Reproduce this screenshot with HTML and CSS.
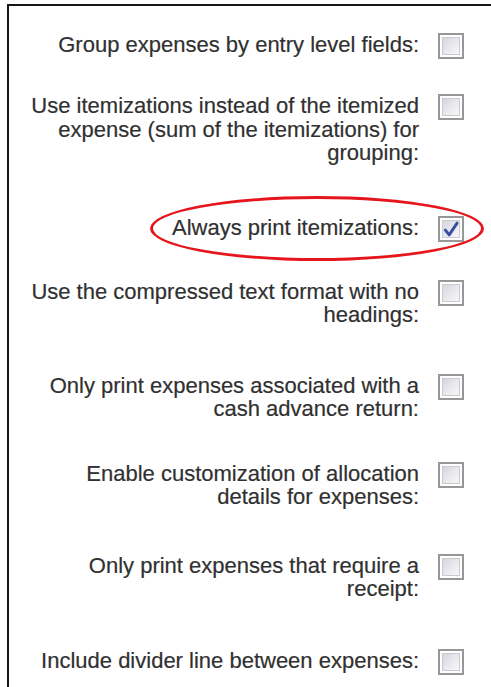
FILE: index.html
```html
<!DOCTYPE html>
<html lang="en">
<head>
<meta charset="utf-8">
<title>Print options</title>
<link rel="stylesheet" href="styles.css">
</head>
<body>
<div class="panel">
  <div class="options">
    <label class="option">
      <span class="text">Group expenses by entry level fields:</span>
      <span class="box"></span>
    </label>
    <label class="option sp-35">
      <span class="text">Use itemizations instead of the itemized expense (sum of the itemizations) for grouping:</span>
      <span class="box"></span>
    </label>
    <label class="option sp-51">
      <span class="text">Always print itemizations:</span>
      <span class="box checked">
        <svg viewBox="0 0 16 16" width="18" height="18" aria-hidden="true">
          <path d="M3 9 L6.4 13.2 L13.4 2.8" fill="none" stroke="#3a4da4" stroke-width="2.6" stroke-linecap="round" stroke-linejoin="round"/>
        </svg>
      </span>
      <span class="ring"></span>
    </label>
    <label class="option sp-38">
      <span class="text">Use the compressed text format with no headings:</span>
      <span class="box"></span>
    </label>
    <label class="option sp-47">
      <span class="text">Only print expenses associated with a cash advance return:</span>
      <span class="box"></span>
    </label>
    <label class="option sp-41">
      <span class="text">Enable customization of allocation details for expenses:</span>
      <span class="box"></span>
    </label>
    <label class="option sp-45">
      <span class="text">Only print expenses that require a receipt:</span>
      <span class="box"></span>
    </label>
    <label class="option sp-48">
      <span class="text">Include divider line between expenses:</span>
      <span class="box"></span>
    </label>
  </div>
</div>
</body>
</html>
```
FILE: styles.css
```css
html, body {
  margin: 0;
  background: #ffffff;
}

body {
  font-family: "Liberation Sans", Arial, sans-serif;
  color: #303030;
  overflow: hidden;
}

.panel {
  margin: 4px 0 0 7px;
  border-top: 2px solid #161616;
  border-left: 2px solid #161616;
  padding: 27px 0 40px 20px;
  min-height: 700px;
}

.options {
  display: flex;
  flex-direction: column;
}

/* spacing between consecutive option rows */
.sp-35 { margin-top: 35px; }
.sp-38 { margin-top: 38px; }
.sp-41 { margin-top: 41px; }
.sp-45 { margin-top: 45px; }
.sp-47 { margin-top: 47px; }
.sp-48 { margin-top: 48px; }
.sp-51 { margin-top: 51px; }

.option {
  position: relative;
  display: grid;
  grid-template-columns: 390px 26px;
  column-gap: 19px;
  align-items: start;
  font-size: 22px;
  line-height: 23.5px;
}

.text {
  text-align: right;
  -webkit-text-stroke: 0.2px #303030;
}

.box {
  box-sizing: border-box;
  width: 26px;
  height: 26px;
  border: 2px solid #979797;
  background: #ffffff;
  padding: 2px;
  display: flex;
}

.box::before {
  content: "";
  flex: 1;
  border: 1px solid #c9cbd1;
  background: linear-gradient(135deg, #d3d6dd 0%, #e9eaee 55%, #f7f7f8 100%);
}

.box.checked {
  position: relative;
}

.box.checked svg {
  position: absolute;
  left: 2px;
  top: 2px;
}

.ring {
  position: absolute;
  left: 121px;
  top: -20px;
  width: 334px;
  height: 65px;
  box-sizing: border-box;
  border: 3px solid #e5151b;
  border-radius: 50%;
  pointer-events: none;
}
```
